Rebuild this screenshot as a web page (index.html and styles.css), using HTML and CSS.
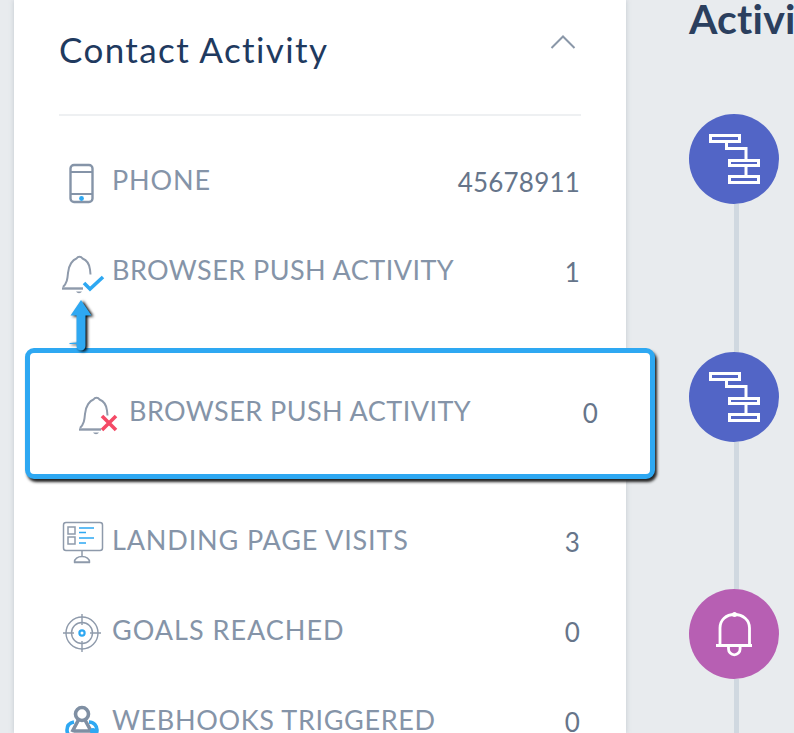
FILE: index.html
```html
<!DOCTYPE html>
<html lang="en">
<head>
<meta charset="utf-8">
<title>Contact Activity</title>
<link rel="stylesheet" href="styles.css">
</head>
<body>
<div class="page">
  <section class="panel">
    <header class="panel-head">
      <h2 class="panel-title">Contact Activity</h2>
      <svg class="chevron" width="26" height="16" viewBox="0 0 26 16"><path d="M1.500 14 13 2.500 24.500 14" fill="none" stroke="#8a97a8" stroke-width="2"/></svg>
    </header>
    <div class="row">
      <svg class="icon" width="50" height="44" viewBox="0 0 50 44">
        <rect x="10.500" y="4" width="22" height="37" rx="3.500" fill="none" stroke="#8594a8" stroke-width="2.400"/>
        <path d="M10 11h22M10 33h22" stroke="#8594a8" stroke-width="2.200"/>
        <circle cx="21.500" cy="37.500" r="2.400" fill="#2ea8f2"/>
      </svg>
      <span class="label label-wide">PHONE</span>
      <span class="value">45678911</span>
    </div>
    <div class="row row-bell">
      <svg class="icon" width="50" height="44" viewBox="0 0 50 44">
        <path d="M3 36c4-4 4.500-8 5-14C8.500 14 13 8.500 16.500 7.500 18 5 21 5 22.500 7.500c5 2 7 6.500 7.500 11l.5 5" fill="none" stroke="#8e9aab" stroke-width="2"/>
        <path d="M2 37.500h21" stroke="#8e9aab" stroke-width="2.400"/>
        <path d="M16 40.500a3.500 3.500 0 0 0 6 0z" fill="#8e9aab"/>
        <path d="m24 32 6 6 13-12" fill="none" stroke="#2ea8f2" stroke-width="3.600"/>
      </svg>
      <span class="label label-tight">BROWSER PUSH ACTIVITY</span>
      <span class="value">1</span>
      <svg class="arrow" width="26" height="52" viewBox="0 0 26 52">
        <path d="M12 0 22.500 15.500 16.500 15.500 16.500 46a4.500 4.500 0 0 1-9 0l0-2-7 0 0-1 7-.5 0-27-6 0z" fill="#2ea8f2"/>
      </svg>
    </div>
    <div class="callout">
      <svg class="icon" width="50" height="44" viewBox="0 0 50 44">
        <path d="M3 36c4-4 4.500-8 5-14C8.500 14 13 8.500 16.500 7.500 18 5 21 5 22.500 7.500c5 2 7 6.500 7.500 11l.5 5" fill="none" stroke="#8e9aab" stroke-width="2"/>
        <path d="M2 37.500h22" stroke="#8e9aab" stroke-width="2.400"/>
        <path d="M16 40.500a3.500 3.500 0 0 0 6 0z" fill="#8e9aab"/>
        <path d="m25 24 14 14M39 24 25 38" stroke="#f44a66" stroke-width="3.600"/>
      </svg>
      <span class="label label-tight">BROWSER PUSH ACTIVITY</span>
      <span class="value">0</span>
    </div>
    <div class="row">
      <svg class="icon" width="50" height="44" viewBox="0 0 50 44">
        <rect x="3.500" y="1.500" width="39" height="28" rx="2.500" fill="none" stroke="#8e9aab" stroke-width="1.500"/>
        <rect x="8" y="6" width="7" height="7" fill="none" stroke="#8e9aab" stroke-width="1.500"/>
        <rect x="8" y="16" width="7" height="7" fill="none" stroke="#8e9aab" stroke-width="1.500"/>
        <path d="M19 7h15M19 11.500h7M19 17h15M19 22h7" stroke="#2ea8f2" stroke-width="1.500"/>
        <path d="M22 30v5M14.500 41c0-3 3-5.500 7.500-5.500s7.500 2.500 7.500 5.500zM14 41.500h16" fill="none" stroke="#8e9aab" stroke-width="1.500"/>
      </svg>
      <span class="label label-wide">LANDING PAGE VISITS</span>
      <span class="value">3</span>
    </div>
    <div class="row">
      <svg class="icon" width="50" height="44" viewBox="0 0 50 44">
        <circle cx="22" cy="22" r="16" fill="none" stroke="#8e9aab" stroke-width="1.400"/>
        <circle cx="22" cy="22" r="10.500" fill="none" stroke="#8e9aab" stroke-width="1.400"/>
        <path d="M22 3v11M22 30v11M3 22h11M30 22h11" stroke="#8e9aab" stroke-width="1.400"/>
        <circle cx="22" cy="22" r="2.600" fill="none" stroke="#2ea8f2" stroke-width="2.200"/>
      </svg>
      <span class="label label-goals">GOALS REACHED</span>
      <span class="value">0</span>
    </div>
    <div class="row">
      <svg class="icon" width="50" height="44" viewBox="0 0 50 44">
        <circle cx="22" cy="13" r="6.500" fill="none" stroke="#7f8fa3" stroke-width="3.600"/>
        <path d="m19 18-7 13M25 19l6 11H14" fill="none" stroke="#7f8fa3" stroke-width="3.600"/>
        <path d="M14 21c-5 1-7 4-7 8 0 5 4 8 8 7M29 21c5 0 8 4 8 8 0 5-4 8-8 7" fill="none" stroke="#2ea8f2" stroke-width="3.600"/>
        <circle cx="33" cy="30" r="3" fill="#2ea8f2"/>
      </svg>
      <span class="label">WEBHOOKS TRIGGERED</span>
      <span class="value">0</span>
    </div>
  </section>
  <section class="timeline">
    <h2 class="timeline-title">Activi</h2>
    <div class="dot dot-blue">
      <svg width="52" height="52" viewBox="0 0 52 52">
        <g fill="none" stroke="#fff" stroke-width="3">
          <rect x="2.500" y="2.500" width="29" height="6"/>
          <rect x="21.500" y="27.500" width="29" height="5"/>
          <rect x="21.500" y="43.500" width="29" height="6"/>
          <path d="M18.500 10v5.500H38V26M38 34v8"/>
        </g>
      </svg>
    </div>
    <div class="link"></div>
    <div class="dot dot-blue">
      <svg width="52" height="52" viewBox="0 0 52 52">
        <g fill="none" stroke="#fff" stroke-width="3">
          <rect x="2.500" y="2.500" width="29" height="6"/>
          <rect x="21.500" y="27.500" width="29" height="5"/>
          <rect x="21.500" y="43.500" width="29" height="6"/>
          <path d="M18.500 10v5.500H38V26M38 34v8"/>
        </g>
      </svg>
    </div>
    <div class="link link-short"></div>
    <div class="dot dot-purple">
      <svg width="40" height="46" viewBox="0 0 40 46">
        <path d="M6 34V17C6 9 12 3.500 20.500 3.500S35.500 9 35.500 17v17" fill="none" stroke="#fff" stroke-width="2.800"/>
        <circle cx="20.500" cy="3.500" r="2.500" fill="#fff"/>
        <path d="M2 34.500h36" stroke="#fff" stroke-width="2.800"/>
        <path d="M14.500 35v3a5.800 5.800 0 0 0 11.600 0v-3" fill="none" stroke="#fff" stroke-width="2.800"/>
      </svg>
    </div>
    <div class="link link-end"></div>
  </section>
</div>
</body>
</html>
```

FILE: styles.css
```css
html, body {
  margin: 0;
  height: 733px;
  overflow: hidden;
  background: #e8ebee;
}

.page {
  display: flex;
  height: 733px;
  padding-left: 14px;
  box-sizing: border-box;
  font-family: Lato, "Liberation Sans", sans-serif;
}

.panel {
  width: 612px;
  flex: none;
  box-sizing: border-box;
  padding: 0 45px;
  background: #fff;
  box-shadow: 0 0 5px rgba(120, 135, 150, .35);
}

.panel-head {
  display: flex;
  justify-content: space-between;
  align-items: flex-start;
  height: 114px;
  border-bottom: 2px solid #eef0f2;
  margin-bottom: 19px;
}

.panel-title {
  margin: 28px 0 0 0;
  font-size: 35px;
  line-height: 42px;
  font-weight: 400;
  letter-spacing: 1.400px;
  color: #1f3a5f;
}

.chevron {
  margin: 34px 5px 0 0;
}

.row {
  display: flex;
  align-items: center;
  height: 90px;
  position: relative;
}

.icon {
  flex: none;
  width: 50px;
  height: 44px;
  margin-left: 1px;
  margin-top: 6px;
}

.label {
  flex: 1;
  margin-left: 2px;
  font-size: 27px;
  line-height: 34px;
  letter-spacing: .65px;
  color: #8594a8;
  white-space: nowrap;
}

.label-tight {
  letter-spacing: .45px;
}

.label-wide {
  letter-spacing: .85px;
}

.label-goals {
  letter-spacing: 1px;
}

.value {
  font-size: 26px;
  line-height: 34px;
  letter-spacing: .2px;
  color: #66758a;
  margin-right: 1px;
  margin-top: 4px;
}

.arrow {
  position: absolute;
  left: 10px;
  top: 75px;
  overflow: visible;
  filter: drop-shadow(2px 1px 1.500px #000);
}

.callout {
  display: flex;
  align-items: center;
  box-sizing: border-box;
  height: 131px;
  margin: 33px -74px 16px -34px;
  padding: 0 51px 6px 46px;
  background: #fff;
  border: 5.500px solid #2ea8f2;
  border-radius: 9px;
  box-shadow: 2px 3px 3px #222;
}

.timeline {
  flex: 1;
  min-width: 0;
  padding-left: 63px;
  overflow: hidden;
}

.timeline-title {
  margin: -6px 0 0 0;
  height: 120px;
  font-size: 41px;
  line-height: 50px;
  font-weight: 700;
  letter-spacing: .2px;
  color: #2b3f5e;
  white-space: nowrap;
}

.dot {
  display: flex;
  align-items: center;
  justify-content: center;
  width: 90px;
  height: 90px;
  border-radius: 50%;
}

.dot-blue {
  background: #5265c6;
}

.dot-purple {
  background: #b75fb3;
}

.link {
  width: 5px;
  height: 148px;
  margin-left: 45px;
  background: #d0d8e0;
}

.link-short {
  height: 147px;
}

.link-end {
  height: 60px;
}
```
